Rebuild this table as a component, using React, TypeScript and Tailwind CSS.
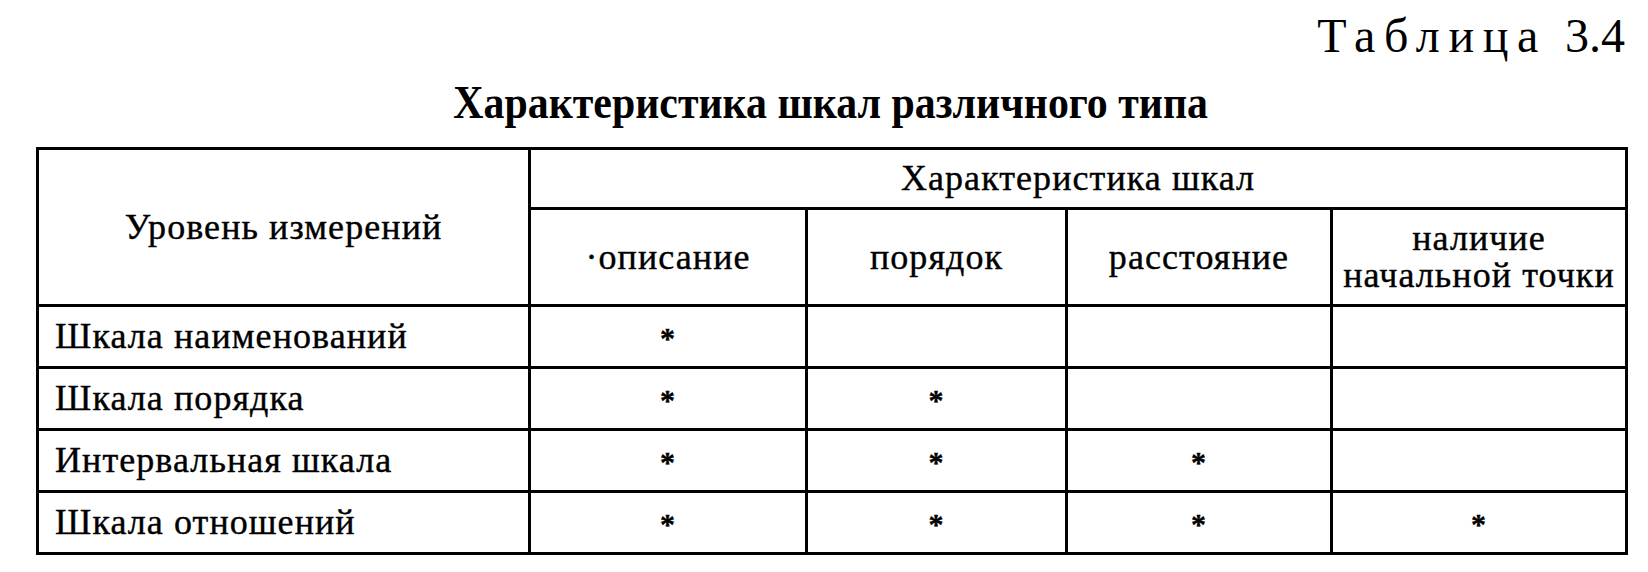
const columns = ["·описание", "порядок", "расстояние"];

const rows = [
  { label: "Шкала наименований", marks: [true, false, false, false] },
  { label: "Шкала порядка", marks: [true, true, false, false] },
  { label: "Интервальная шкала", marks: [true, true, true, false] },
  { label: "Шкала отношений", marks: [true, true, true, true] },
];

const cell = "border-[3px] border-black p-0";

export default function App() {
  return (
    <div className="w-[1648px] h-[572px] bg-white text-black pl-[36px] pt-[12px] font-['Liberation_Serif','Times_New_Roman',serif]">
      {/* Table number */}
      <div className="w-[1589px] text-right text-[48px] leading-none">
        <span className="tracking-[0.18em]">Таблица</span>
        <span className="ml-[18px]">3.4</span>
      </div>

      {/* Caption */}
      <div className="w-[1589px] mt-[20px] flex justify-center">
        <h1 className="inline-block text-[46px] font-bold leading-none scale-x-[0.91] origin-center">
          Характеристика шкал различного типа
        </h1>
      </div>

      <table className="mt-[21px] w-[1589px] table-fixed border-collapse text-[36px] leading-[37px] tracking-[0.03em] [-webkit-text-stroke:0.4px_black]">
        <colgroup>
          <col className="w-[492px]" />
          <col className="w-[277px]" />
          <col className="w-[260px]" />
          <col className="w-[265px]" />
          <col className="w-[295px]" />
        </colgroup>
        <thead>
          <tr className="h-[60px]">
            <th rowSpan={2} className={`${cell} font-normal text-center align-middle`}>
              Уровень измерений
            </th>
            <th colSpan={4} className={`${cell} font-normal text-center align-middle`}>
              Характеристика шкал
            </th>
          </tr>
          <tr className="h-[97px]">
            {columns.map((c) => (
              <th key={c} className={`${cell} font-normal text-center align-middle`}>
                {c}
              </th>
            ))}
            <th className={`${cell} font-normal text-center align-middle`}>
              наличие
              <br />
              начальной точки
            </th>
          </tr>
        </thead>
        <tbody>
          {rows.map((r) => (
            <tr key={r.label} className="h-[62px]">
              <td className={`${cell} pl-[16px] text-left align-middle`}>{r.label}</td>
              {r.marks.map((m, i) => (
                <td key={i} className={`${cell} text-center align-middle`}>
                  {m && <span className="font-bold text-[30px] leading-none">*</span>}
                </td>
              ))}
            </tr>
          ))}
        </tbody>
      </table>
    </div>
  );
}
